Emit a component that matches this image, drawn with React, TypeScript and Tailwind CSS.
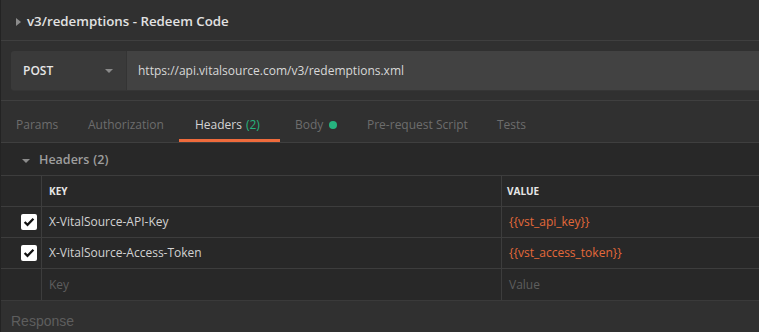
import React from "react";

const font = { fontFamily: '"Open Sans", "Noto Sans", sans-serif' };

function Check() {
  return (
    <div className="w-4 h-4 rounded-[2px] bg-white flex items-center justify-center">
      <svg width="12" height="10" viewBox="0 0 12 10">
        <path d="M1.6 5 L4.5 7.8 L10.4 1.8" fill="none" stroke="#111" strokeWidth="2.3" />
      </svg>
    </div>
  );
}

function Row({
  checked,
  k,
  v,
  placeholder,
  last,
}: {
  checked?: boolean;
  k: string;
  v: string;
  placeholder?: boolean;
  last?: boolean;
}) {
  return (
    <div className={`flex h-[31px] ${last ? "" : "border-b border-[#3d3d3d]"}`}>
      <div className="w-[41px] flex items-center pl-[20px] border-r border-[#3d3d3d]">
        {checked ? <Check /> : null}
      </div>
      <div
        className={`w-[460px] pl-[7px] flex items-center text-[12px] border-r border-[#3d3d3d] ${
          placeholder ? "text-[#5e5e5e]" : "text-[#d2d2d2]"
        }`}
      >
        {k}
      </div>
      <div
        className={`flex-1 pl-[7px] flex items-center text-[12px] ${
          placeholder ? "text-[#5e5e5e]" : "text-[#e4683a]"
        }`}
      >
        {v}
      </div>
    </div>
  );
}

export default function App() {
  return (
    <div
      className="w-[759px] h-[332px] overflow-hidden bg-[#303030] border-l border-[#232323] flex flex-col"
      style={font}
    >
      {/* title */}
      <div className="h-[41px] flex items-center pl-[15px] pt-[3px] border-b border-[#3f3f3f] shrink-0">
        <svg width="5" height="8" viewBox="0 0 5 8" className="mr-[6px]">
          <path d="M0 0 L5 4 L0 8 Z" fill="#8c8c8c" />
        </svg>
        <span className="text-[13.3px] font-semibold text-[#e2e2e2]">
          v3/redemptions - Redeem Code
        </span>
      </div>

      {/* url bar */}
      <div className="h-[60px] pt-[10px] pl-[10px] border-b border-[#3f3f3f] shrink-0">
        <div className="flex h-[40px] rounded-l-[3px] overflow-hidden border-b border-[#353535]">
          <div className="w-[116px] bg-[#3a3a3a] flex items-center pl-[12px] pr-[13px] justify-between border-r border-[#343434]">
            <span className="text-[12px] font-semibold text-[#e6e6e6]">POST</span>
            <svg width="8" height="4" viewBox="0 0 8 4">
              <path d="M0 0 L8 0 L4 4 Z" fill="#8a8a8a" />
            </svg>
          </div>
          <div className="flex-1 bg-[#424242] flex items-center pl-[11px] text-[12px] text-[#d8d8d8]">
            https://api.vitalsource.com/v3/redemptions.xml
          </div>
        </div>
      </div>

      {/* tabs */}
      <div className="h-[42px] flex items-stretch border-b border-[#3f3f3f] text-[12px] shrink-0 pl-[15px]">
        <div className="flex items-center pt-[6px] text-[#6d6d6d] w-[72px]">Params</div>
        <div className="flex items-center pt-[6px] text-[#6d6d6d] w-[91px]">Authorization</div>
        <div className="relative flex items-center pt-[6px] text-[#d4d4d4] w-[101px] pl-[16px]">
          <span>Headers</span>
          <span className="text-[#26b47f] ml-[4px]">(2)</span>
          <div className="absolute left-0 right-0 bottom-0 h-[3px] bg-[#ef6b3c]" />
        </div>
        <div className="flex items-center pt-[6px] text-[#6d6d6d] ml-[15px] w-[72px]">
          <span>Body</span>
          <span className="ml-[6px] w-[8px] h-[8px] rounded-full bg-[#26b47f]" />
        </div>
        <div className="flex items-center pt-[6px] text-[#6d6d6d] w-[130px]">Pre-request Script</div>
        <div className="flex items-center pt-[6px] text-[#6d6d6d]">Tests</div>
      </div>

      {/* headers section */}
      <div className="bg-[#282828] shrink-0">
        <div className="h-[33px] flex items-center pl-[21px] pt-[3px] border-b border-[#3d3d3d]">
          <svg width="8" height="4" viewBox="0 0 8 4" className="mr-[9px]">
            <path d="M0 0 L8 0 L4 4 Z" fill="#8c8c8c" />
          </svg>
          <span className="text-[12.5px] font-semibold text-[#9e9e9e]">Headers</span>
          <span className="text-[12.5px] font-semibold text-[#9e9e9e] ml-[4px]">(2)</span>
        </div>
        <div className="flex h-[31px] border-b border-[#3d3d3d]">
          <div className="w-[41px] border-r border-[#3d3d3d]" />
          <div className="w-[460px] pl-[7px] flex items-center text-[10px] font-bold text-[#e6e6e6] border-r border-[#3d3d3d]">
            KEY
          </div>
          <div className="flex-1 pl-[5px] flex items-center text-[10px] font-bold text-[#e6e6e6]">
            VALUE
          </div>
        </div>
        <Row checked k="X-VitalSource-API-Key" v="{{vst_api_key}}" />
        <Row checked k="X-VitalSource-Access-Token" v="{{vst_access_token}}" />
        <Row k="Key" v="Value" placeholder last />
      </div>

      {/* response */}
      <div
        className="flex-1 border-t border-[#3a3a3a] pl-[10px] pt-[10px] text-[14px] text-[#5e5e5e]"
        style={{ fontFamily: '"Liberation Sans", Arial, sans-serif' }}
      >
        Response
      </div>
    </div>
  );
}
